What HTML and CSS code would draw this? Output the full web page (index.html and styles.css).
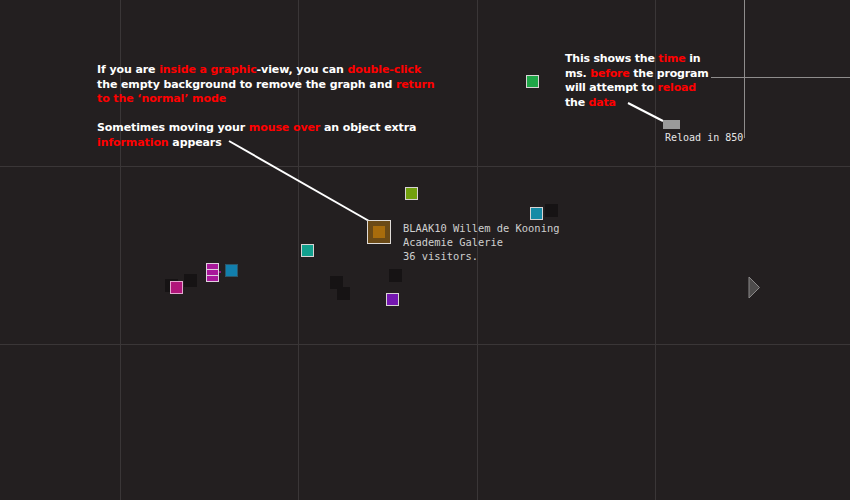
FILE: index.html
```html
<!DOCTYPE html>
<html>
<head>
<meta charset="utf-8">
<link rel="stylesheet" href="styles.css">
</head>
<body>
<div class="stage">
  <svg class="links" width="850" height="500" viewBox="0 0 850 500">
    <line x1="229" y1="141" x2="369" y2="221" />
    <line x1="628" y1="103" x2="663" y2="121" />
  </svg>

  <div class="cross-v"></div>
  <div class="cross-h"></div>

  <div class="note note-a">
    <p>If you are <em>inside a graphic</em>-view, you can <em>double-click</em><br>the empty background to remove the graph and <em>return</em><br><em>to the ‘normal’ mode</em></p>
    <p>Sometimes moving your <em>mouse over</em> an object extra<br><em>information</em> appears</p>
  </div>

  <div class="note note-b">
    <p>This shows the <em>time</em> in<br>ms. <em>before</em> the program<br>will attempt to <em>reload</em><br>the <em>data</em></p>
  </div>

  <div class="reload-bar"></div>
  <div class="reload-label">Reload in 850</div>

  <div class="node green" style="left:526px;top:75px"></div>
  <div class="node lime" style="left:405px;top:187px"></div>
  <div class="node cyan" style="left:530px;top:207px"></div>
  <div class="node dark" style="left:545px;top:204px"></div>
  <div class="node teal" style="left:301px;top:244px"></div>
  <div class="node dark" style="left:165px;top:279px"></div>
  <div class="node magenta" style="left:170px;top:281px"></div>
  <div class="node dark" style="left:184px;top:274px"></div>
  <div class="stack" style="left:206px;top:263px"><span></span><span></span><span></span></div>
  <div class="dot" style="left:219px;top:271px"></div>
  <div class="node blue" style="left:225px;top:264px"></div>
  <div class="node dark" style="left:330px;top:276px"></div>
  <div class="node dark" style="left:337px;top:287px"></div>
  <div class="node dark" style="left:389px;top:269px"></div>
  <div class="node purple" style="left:386px;top:293px"></div>

  <div class="selected" style="left:367px;top:220px"><span></span></div>
  <div class="tip">BLAAK10 Willem de Kooning<br>Academie Galerie<br>36 visitors.</div>

  <svg class="next" width="14" height="24" viewBox="0 0 14 24">
    <polygon points="1,1 11.5,11.5 1,22" />
  </svg>
</div>
</body>
</html>
```
FILE: styles.css
```css
html, body {
  margin: 0;
  padding: 0;
  background: #231f20;
}

.stage {
  position: relative;
  width: 850px;
  height: 500px;
  overflow: hidden;
  background-color: #231f20;
  background-image:
    linear-gradient(#3a3637, #3a3637),
    linear-gradient(#3a3637, #3a3637),
    linear-gradient(#3a3637, #3a3637),
    linear-gradient(#3a3637, #3a3637),
    linear-gradient(#3a3637, #3a3637),
    linear-gradient(#3a3637, #3a3637);
  background-repeat: no-repeat;
  background-size: 1px 100%, 1px 100%, 1px 100%, 1px 100%, 100% 1px, 100% 1px;
  background-position: 120px 0, 298px 0, 477px 0, 655px 0, 0 166px, 0 344px;
}

.links {
  position: absolute;
  left: 0;
  top: 0;
}
.links line {
  stroke: #ffffff;
  stroke-width: 2;
}

.cross-v {
  position: absolute;
  left: 744px;
  top: 0;
  width: 1px;
  height: 138px;
  background: #8e8c8c;
}
.cross-h {
  position: absolute;
  left: 711px;
  top: 77px;
  width: 139px;
  height: 1px;
  background: #8e8c8c;
}

.note {
  position: absolute;
  font-family: "DejaVu Sans", sans-serif;
  font-weight: bold;
  font-size: 11px;
  line-height: 14.5px;
  letter-spacing: -0.1px;
  color: #ffffff;
  white-space: nowrap;
}
.note p {
  margin: 0 0 14.5px 0;
}
.note em {
  font-style: normal;
  color: #ff0000;
}
.note-a {
  left: 97px;
  top: 63px;
}
.note-b {
  left: 565px;
  top: 52px;
  letter-spacing: -0.2px;
}

.reload-bar {
  position: absolute;
  left: 663px;
  top: 120px;
  width: 17px;
  height: 9px;
  background: #9a9a9a;
}
.reload-label {
  position: absolute;
  left: 665px;
  top: 131px;
  font-family: "DejaVu Sans Mono", monospace;
  font-size: 10px;
  line-height: 14px;
  color: #e6e6e6;
}

.node {
  position: absolute;
  width: 11px;
  height: 11px;
  border: 1px solid #d8d4d4;
}
.green { background: #1fa648; }
.lime { background: #72a00f; }
.cyan { background: #168ba6; }
.teal { background: #12a08e; }
.magenta { background: #b0157a; border-color: #e2a8cf; }
.blue { background: #127fad; border-color: #2c5568; }
.purple { background: #7417b0; }
.dark {
  background: #161314;
  border-color: #161314;
}

.stack {
  position: absolute;
  width: 11px;
  border: 1px solid #e0cfe0;
  display: flex;
  flex-direction: column;
}
.stack span {
  height: 5px;
  background: #a8189a;
  border-top: 1px solid #e0cfe0;
}
.stack span:first-child {
  border-top: none;
}
.dot {
  position: absolute;
  width: 2px;
  height: 2px;
  background: #8a1a7e;
}

.selected {
  position: absolute;
  width: 22px;
  height: 22px;
  border: 1px solid #e0dcd8;
  background: #6b4a16;
  display: flex;
  align-items: center;
  justify-content: center;
}
.selected span {
  width: 12px;
  height: 12px;
  background: #a86c0c;
}

.tip {
  position: absolute;
  left: 403px;
  top: 221px;
  font-family: "DejaVu Sans Mono", monospace;
  font-size: 10.4px;
  line-height: 14px;
  color: #cfcfcf;
}

.next {
  position: absolute;
  left: 748px;
  top: 276px;
}
.next polygon {
  fill: #4e4c4c;
  stroke: #8a8888;
  stroke-width: 1;
}
```
